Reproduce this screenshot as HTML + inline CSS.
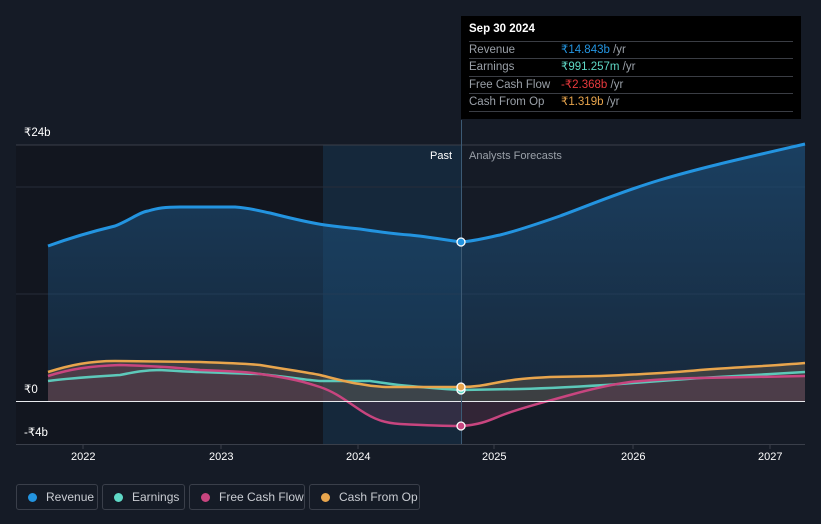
<!DOCTYPE html>
<html><head><meta charset="utf-8"><style>
body{margin:0;background:#151b26;width:821px;height:524px;overflow:hidden;font-family:"Liberation Sans",sans-serif;position:relative}
.t{position:absolute;color:#fff;font-size:12px}
.tip{position:absolute;left:461px;top:16px;width:340px;height:103px;background:#000}
.row{position:absolute;left:8px;width:324px;border-top:1px solid #3a3d44;font-size:11.5px;color:#9aa0a8;height:17px;line-height:17px}
.row span{position:absolute;left:92px}
.leg{position:absolute;top:484px;height:26px;border:1px solid #3a3f4a;border-radius:3px;color:#c9ccd2;font-size:12px;line-height:25px;box-sizing:border-box}
.leg i{display:inline-block;width:9px;height:9px;border-radius:50%;margin:0 9px 0 11px;vertical-align:-0.5px}
</style></head><body>
<svg width="821" height="524" style="position:absolute;left:0;top:0">
<defs>
<linearGradient id="rg" x1="0" y1="0" x2="0" y2="1"><stop offset="0" stop-color="#1d4f7a" stop-opacity=".7"/><stop offset="1" stop-color="#1d4f7a" stop-opacity=".25"/></linearGradient>
</defs>
<rect x="16" y="145" width="445" height="299" fill="#12161f"/>
<rect x="323" y="145" width="138" height="299" fill="#15283b"/>
<line x1="16" y1="145" x2="805" y2="145" stroke="#3a3f4a"/>
<line x1="16" y1="187" x2="805" y2="187" stroke="#262c38"/>
<line x1="16" y1="294" x2="805" y2="294" stroke="#262c38"/>
<path d="M48,246 C70,238 90,232 115,226 C130,220 140,212 148,211 C158,208 165,207 180,207 L235,207 C250,208 260,211 270,213 C290,218 305,222 325,225 C340,227 350,228 360,229 C380,232 395,234 410,235 C430,237 445,240 461,242 C475,241 490,237 500,235 C520,230 540,223 560,216 C590,205 620,192 660,180 C700,168 740,159 805,144 L805,401 L48,401Z" fill="url(#rg)"/>
<path d="M48,372 C70,365 90,361 115,361 L200,362 C230,363 250,364 260,365 C290,370 310,373 320,375 C340,380 350,383 360,384 C370,386 380,387 390,387 L461,387 C475,387 485,385 495,383 C515,379 530,378 550,377 L600,376 C650,374 680,372 700,370 C740,367 770,366 805,363 L805,401 L48,401Z" fill="#6b5a4a" fill-opacity=".45"/>
<path d="M48,376 C70,369 90,366 120,365 C160,366 180,368 200,370 C230,371 250,372 260,374 C290,378 305,382 320,387 C335,392 345,400 360,410 C375,420 385,423 400,424 C420,425 440,426 461,426 C480,425 490,420 500,416 C520,408 545,402 570,395 C595,388 615,384 630,382 C660,379 690,378 700,378 L805,376 L805,401 L48,401Z" fill="#6b3a55" fill-opacity=".35"/>
<path d="M48,246 C70,238 90,232 115,226 C130,220 140,212 148,211 C158,208 165,207 180,207 L235,207 C250,208 260,211 270,213 C290,218 305,222 325,225 C340,227 350,228 360,229 C380,232 395,234 410,235 C430,237 445,240 461,242 C475,241 490,237 500,235 C520,230 540,223 560,216 C590,205 620,192 660,180 C700,168 740,159 805,144" fill="none" stroke="#2394e0" stroke-width="3"/>
<path d="M48,381 C70,378 90,377 120,375 C135,372 145,370 160,370 C180,371 190,372 200,372 C230,373 250,374 260,374 C290,377 305,380 320,381 L370,381 C385,383 395,385 410,386 C430,388 445,389 461,390 L520,389 C560,388 590,386 620,384 C660,381 690,379 700,378 C740,376 770,374 805,372" fill="none" stroke="#5fd8c6" stroke-width="2.5" opacity=".9"/>
<path d="M48,376 C70,369 90,366 120,365 C160,366 180,368 200,370 C230,371 250,372 260,374 C290,378 305,382 320,387 C335,392 345,400 360,410 C375,420 385,423 400,424 C420,425 440,426 461,426 C480,425 490,420 500,416 C520,408 545,402 570,395 C595,388 615,384 630,382 C660,379 690,378 700,378 L805,376" fill="none" stroke="#c8457f" stroke-width="2.5"/>
<path d="M48,372 C70,365 90,361 115,361 L200,362 C230,363 250,364 260,365 C290,370 310,373 320,375 C340,380 350,383 360,384 C370,386 380,387 390,387 L461,387 C475,387 485,385 495,383 C515,379 530,378 550,377 L600,376 C650,374 680,372 700,370 C740,367 770,366 805,363" fill="none" stroke="#e8a54d" stroke-width="2.5"/>
<line x1="16" y1="401.5" x2="805" y2="401.5" stroke="#e8eaee" stroke-width="1"/>
<line x1="461.5" y1="120" x2="461.5" y2="444" stroke="#3c5a74"/>
<line x1="16" y1="444.5" x2="805" y2="444.5" stroke="#3a3f4a"/>
<g stroke="#3a3f4a"><line x1="83" y1="444" x2="83" y2="449"/><line x1="221" y1="444" x2="221" y2="449"/><line x1="358" y1="444" x2="358" y2="449"/><line x1="494" y1="444" x2="494" y2="449"/><line x1="633" y1="444" x2="633" y2="449"/><line x1="770" y1="444" x2="770" y2="449"/></g>
<circle cx="461" cy="242" r="4" fill="#2394e0" stroke="#fff" stroke-width="1.3"/>
<circle cx="461" cy="390" r="4" fill="#5fd8c6" stroke="#fff" stroke-width="1.3"/>
<circle cx="461" cy="387" r="4" fill="#e8a54d" stroke="#fff" stroke-width="1.3"/>
<circle cx="461" cy="426" r="4" fill="#c8457f" stroke="#fff" stroke-width="1.3"/>
</svg>
<div class="t" style="left:24px;top:125px;font-size:11.5px">₹24b</div>
<div class="t" style="left:24px;top:382px;font-size:11.5px">₹0</div>
<div class="t" style="left:24px;top:425px;font-size:11.5px">-₹4b</div>
<div class="t" style="left:430px;top:150px;font-size:11px">Past</div>
<div class="t" style="left:469px;top:150px;font-size:11px;color:#9aa0a8">Analysts Forecasts</div>
<div class="t" style="left:71px;top:451px;font-size:11px">2022</div>
<div class="t" style="left:209px;top:451px;font-size:11px">2023</div>
<div class="t" style="left:346px;top:451px;font-size:11px">2024</div>
<div class="t" style="left:482px;top:451px;font-size:11px">2025</div>
<div class="t" style="left:621px;top:451px;font-size:11px">2026</div>
<div class="t" style="left:758px;top:451px;font-size:11px">2027</div>
<div class="tip">
<div class="t" style="left:8px;top:7px;font-size:11.5px;font-weight:bold">Sep 30 2024</div>
<div class="row" style="top:25px">Revenue<span><b style="font-weight:normal;color:#2394e0">₹14.843b</b> /yr</span></div>
<div class="row" style="top:42px">Earnings<span><b style="font-weight:normal;color:#5fd8c6">₹991.257m</b> /yr</span></div>
<div class="row" style="top:60px">Free Cash Flow<span><b style="font-weight:normal;color:#e8393d">-₹2.368b</b> /yr</span></div>
<div class="row" style="top:77px;border-bottom:1px solid #3a3d44">Cash From Op<span><b style="font-weight:normal;color:#e8a54d">₹1.319b</b> /yr</span></div>
</div>
<div class="leg" style="left:16px;width:82px"><i style="background:#2394e0"></i>Revenue</div>
<div class="leg" style="left:102px;width:83px"><i style="background:#5fd8c6"></i>Earnings</div>
<div class="leg" style="left:189px;width:116px"><i style="background:#c8457f"></i>Free Cash Flow</div>
<div class="leg" style="left:309px;width:111px"><i style="background:#e8a54d"></i>Cash From Op</div>
</body></html>
